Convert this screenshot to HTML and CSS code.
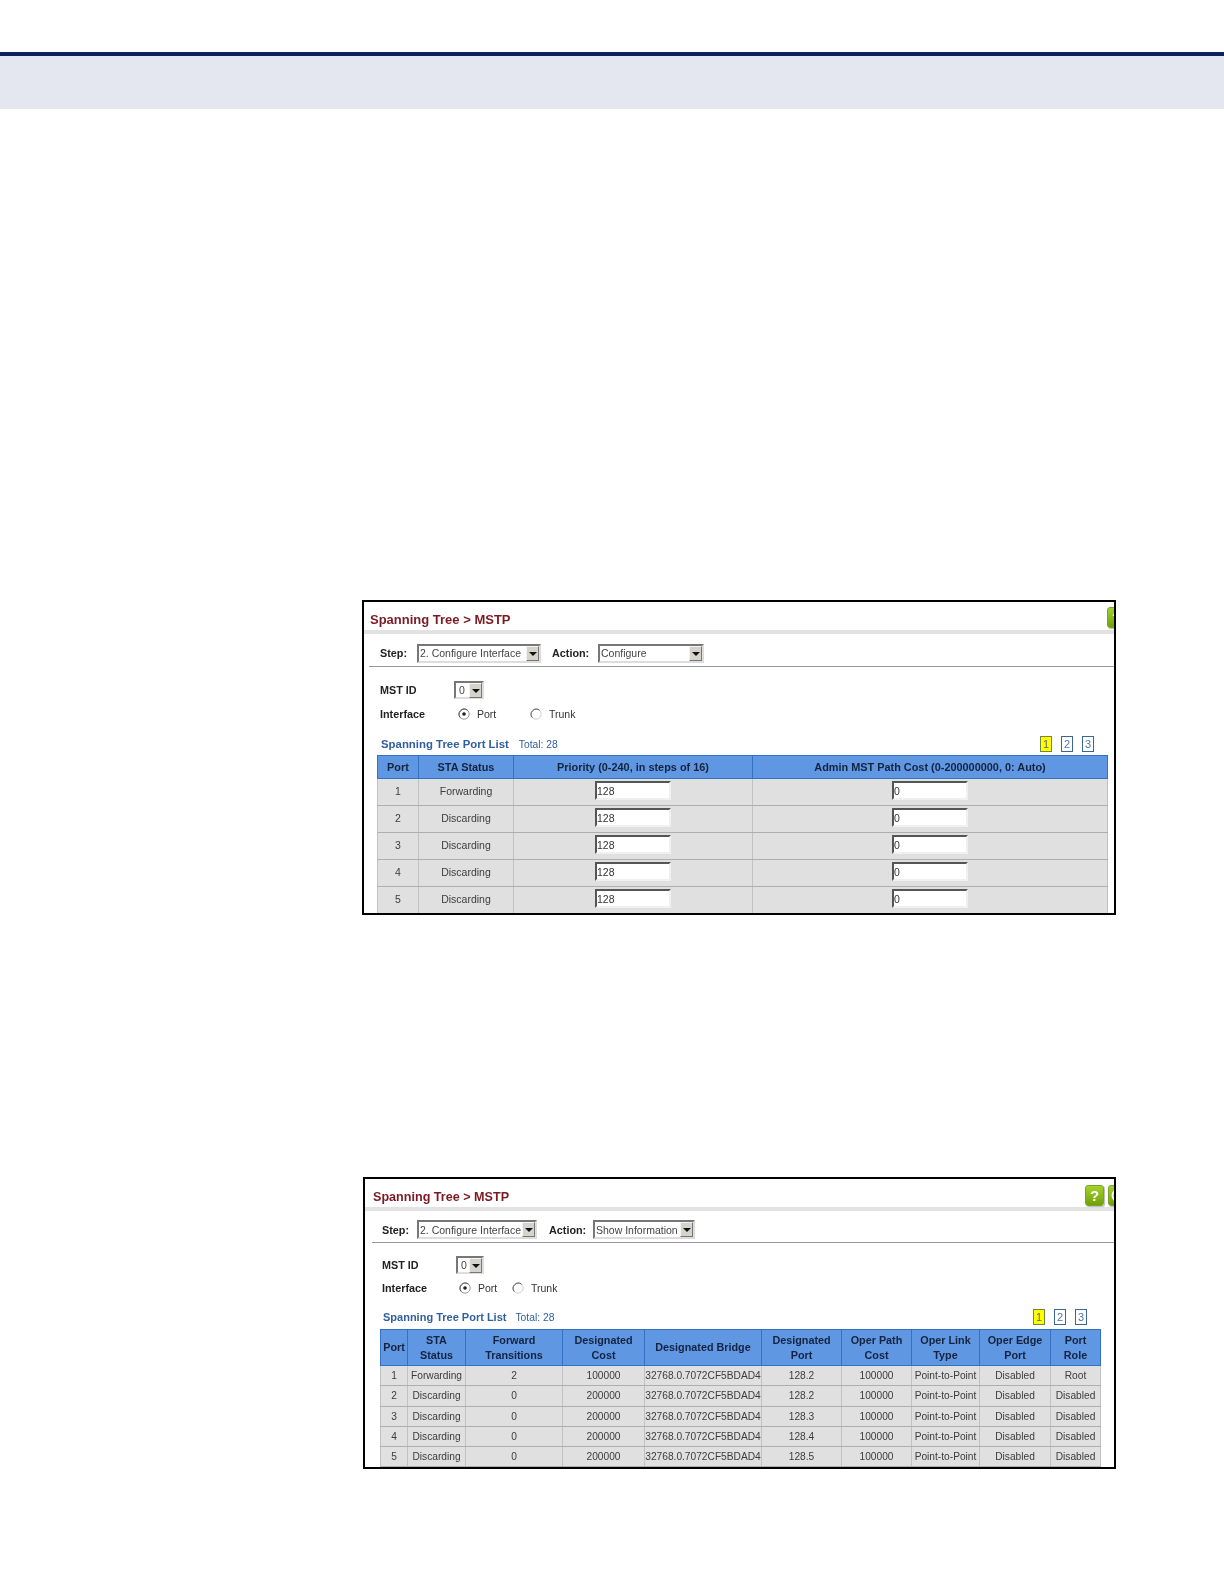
FILE: index.html
```html
<!DOCTYPE html>
<html lang="en">
<head>
<meta charset="utf-8">
<title>Spanning Tree &gt; MSTP</title>
<link rel="stylesheet" href="styles.css">
</head>
<body>
<header class="band"></header>

<section class="panel panel-a">
  <div class="head">
    <h1 class="title">Spanning Tree &gt; MSTP</h1>
    <span class="icon">?</span>
  </div>
  <div class="toolbar">
    <span class="label">Step:</span>
    <span class="sel sel-step"><span class="sel-text">2. Configure Interface</span><span class="arrow"></span></span>
    <span class="label label-action">Action:</span>
    <span class="sel sel-action"><span class="sel-text">Configure</span><span class="arrow"></span></span>
  </div>
  <div class="form-row row-mst">
    <span class="label form-label">MST ID</span>
    <span class="sel sel-id"><span class="sel-text">0</span><span class="arrow"></span></span>
  </div>
  <div class="form-row row-iface">
    <span class="label form-label">Interface</span>
    <svg class="radio" viewBox="0 0 12 12"><circle cx="6" cy="6" r="5.2" fill="#fff" stroke="#9a9a9a"/><path d="M2.3 9.6A5.2 5.2 0 0 1 9.6 2.3" fill="none" stroke="#555"/><circle cx="6" cy="6" r="1.8" fill="#222"/></svg>
    <span class="opt opt-port">Port</span>
    <svg class="radio" viewBox="0 0 12 12"><circle cx="6" cy="6" r="5.2" fill="#fff" stroke="#d0d0d0"/><path d="M2.3 9.6A5.2 5.2 0 0 1 9.6 2.3" fill="none" stroke="#555"/></svg>
    <span class="opt">Trunk</span>
  </div>
  <div class="list-head">
    <span class="list-title">Spanning Tree Port List</span>
    <span class="total">Total: 28</span>
    <span class="pager">
      <span class="page page-on">1</span>
      <span class="page">2</span>
      <span class="page">3</span>
    </span>
  </div>
  <table class="grid">
    <colgroup><col class="a1"><col class="a2"><col class="a3"><col class="a4"></colgroup>
    <thead>
      <tr><th>Port</th><th>STA Status</th><th>Priority (0-240, in steps of 16)</th><th>Admin MST Path Cost (0-200000000, 0: Auto)</th></tr>
    </thead>
    <tbody>
      <tr><td>1</td><td>Forwarding</td><td class="cell-field"><span class="field">128</span></td><td class="cell-field"><span class="field">0</span></td></tr>
      <tr><td>2</td><td>Discarding</td><td class="cell-field"><span class="field">128</span></td><td class="cell-field"><span class="field">0</span></td></tr>
      <tr><td>3</td><td>Discarding</td><td class="cell-field"><span class="field">128</span></td><td class="cell-field"><span class="field">0</span></td></tr>
      <tr><td>4</td><td>Discarding</td><td class="cell-field"><span class="field">128</span></td><td class="cell-field"><span class="field">0</span></td></tr>
      <tr><td>5</td><td>Discarding</td><td class="cell-field"><span class="field">128</span></td><td class="cell-field"><span class="field">0</span></td></tr>
    </tbody>
  </table>
</section>

<section class="panel panel-b">
  <div class="head">
    <h1 class="title">Spanning Tree &gt; MSTP</h1>
    <span class="icon">?</span>
    <span class="icon icon-next"><svg class="refresh" viewBox="0 0 19 20"><path d="M14 5.5A6 6 0 1 0 14 14.5" fill="none" stroke="#fff" stroke-width="2.4"/></svg></span>
  </div>
  <div class="toolbar">
    <span class="label">Step:</span>
    <span class="sel sel-step"><span class="sel-text">2. Configure Interface</span><span class="arrow"></span></span>
    <span class="label label-action">Action:</span>
    <span class="sel sel-action"><span class="sel-text">Show Information</span><span class="arrow"></span></span>
  </div>
  <div class="form-row row-mst">
    <span class="label form-label">MST ID</span>
    <span class="sel sel-id"><span class="sel-text">0</span><span class="arrow"></span></span>
  </div>
  <div class="form-row row-iface">
    <span class="label form-label">Interface</span>
    <svg class="radio" viewBox="0 0 12 12"><circle cx="6" cy="6" r="5.2" fill="#fff" stroke="#9a9a9a"/><path d="M2.3 9.6A5.2 5.2 0 0 1 9.6 2.3" fill="none" stroke="#555"/><circle cx="6" cy="6" r="1.8" fill="#222"/></svg>
    <span class="opt opt-port">Port</span>
    <svg class="radio" viewBox="0 0 12 12"><circle cx="6" cy="6" r="5.2" fill="#fff" stroke="#d0d0d0"/><path d="M2.3 9.6A5.2 5.2 0 0 1 9.6 2.3" fill="none" stroke="#555"/></svg>
    <span class="opt">Trunk</span>
  </div>
  <div class="list-head">
    <span class="list-title">Spanning Tree Port List</span>
    <span class="total">Total: 28</span>
    <span class="pager">
      <span class="page page-on">1</span>
      <span class="page">2</span>
      <span class="page">3</span>
    </span>
  </div>
  <table class="grid">
    <colgroup><col class="b1"><col class="b2"><col class="b3"><col class="b4"><col class="b5"><col class="b6"><col class="b7"><col class="b8"><col class="b9"><col class="b10"></colgroup>
    <thead>
      <tr><th>Port</th><th>STA<br>Status</th><th>Forward<br>Transitions</th><th>Designated<br>Cost</th><th>Designated Bridge</th><th>Designated<br>Port</th><th>Oper Path<br>Cost</th><th>Oper Link<br>Type</th><th>Oper Edge<br>Port</th><th>Port<br>Role</th></tr>
    </thead>
    <tbody>
      <tr><td>1</td><td>Forwarding</td><td>2</td><td>100000</td><td>32768.0.7072CF5BDAD4</td><td>128.2</td><td>100000</td><td>Point-to-Point</td><td>Disabled</td><td>Root</td></tr>
      <tr><td>2</td><td>Discarding</td><td>0</td><td>200000</td><td>32768.0.7072CF5BDAD4</td><td>128.2</td><td>100000</td><td>Point-to-Point</td><td>Disabled</td><td>Disabled</td></tr>
      <tr><td>3</td><td>Discarding</td><td>0</td><td>200000</td><td>32768.0.7072CF5BDAD4</td><td>128.3</td><td>100000</td><td>Point-to-Point</td><td>Disabled</td><td>Disabled</td></tr>
      <tr><td>4</td><td>Discarding</td><td>0</td><td>200000</td><td>32768.0.7072CF5BDAD4</td><td>128.4</td><td>100000</td><td>Point-to-Point</td><td>Disabled</td><td>Disabled</td></tr>
      <tr><td>5</td><td>Discarding</td><td>0</td><td>200000</td><td>32768.0.7072CF5BDAD4</td><td>128.5</td><td>100000</td><td>Point-to-Point</td><td>Disabled</td><td>Disabled</td></tr>
    </tbody>
  </table>
</section>
</body>
</html>
```

FILE: styles.css
```css
html, body { margin: 0; padding: 0; background: #fff; }
body { font-family: "Liberation Sans", Arial, sans-serif; font-size: 10.5px; color: #333; height: 1584px; overflow: hidden; }

.band { margin-top: 52px; height: 53px; border-top: 4px solid #0b2358; background: #e4e7ef; }

.panel { box-sizing: border-box; border: 2px solid #000; overflow: hidden; background: #fff; }
.panel > * { filter: blur(.25px); }
.panel-a { margin: 491px 0 0 362px; width: 754px; height: 315px; }
.panel-b { margin: 262px 0 0 363px; width: 753px; height: 292px; }

.head { display: flex; align-items: flex-start; height: 28px; border-bottom: 4px solid #e2e2e2; }
.title { flex: none; margin: 0; box-sizing: border-box; line-height: 17px; font-weight: bold; color: #7a1a22; }
.panel-a .title { width: 743px; padding: 9px 0 0 6px; font-size: 13px; }
.panel-b .title { width: 720px; padding: 10px 0 0 8px; font-size: 12.6px; }

.icon { flex: none; position: relative; width: 19px; height: 21px; box-sizing: border-box; border-radius: 3px; background: linear-gradient(#a6d12c, #6ea20a); border: 1px solid #7aa520; box-shadow: 1px 1px 1px #bbb; color: #fff; font-size: 15px; line-height: 19px; font-weight: bold; text-align: center; }
.panel-a .icon { margin-top: 5px; }
.panel-b .icon { margin-top: 6px; }
.icon-next { margin-left: 4px; }
.refresh { display: block; width: 17px; height: 19px; }

.toolbar { display: flex; align-items: center; box-sizing: border-box; padding-top: 6px; border-bottom: 1px solid #999; }
.panel-a .toolbar { height: 33px; margin-left: 5px; padding-left: 11px; }
.panel-b .toolbar { height: 32px; margin-left: 7px; padding-left: 10px; }

.label { font-size: 10.8px; font-weight: bold; color: #222; white-space: nowrap; }
.panel-a .toolbar .label { width: 37px; }
.panel-b .toolbar .label { width: 35px; }
.panel-a .toolbar .label-action { width: 46px; margin-left: 11px; }
.panel-b .toolbar .label-action { width: 44px; margin-left: 12px; }

.sel { display: flex; align-items: center; justify-content: space-between; box-sizing: border-box; height: 19px; border: 2px solid; border-color: #777 #ddd #ddd #777; background: #fff; color: #444; padding-left: 1px; }
.sel-text { white-space: nowrap; }
.arrow { position: relative; flex: none; width: 13px; height: 15px; background: #d6d3cc; border: 1px solid; box-sizing: border-box; border-color: #f4f4f4 #777 #777 #f4f4f4; }
.arrow::after { content: ""; position: absolute; left: 2px; top: 5px; border: 4px solid transparent; border-bottom-width: 0; border-top-color: #111; }
.panel-a .sel-step { width: 124px; }
.panel-b .sel-step { width: 120px; }
.panel-a .sel-action { width: 106px; }
.panel-b .sel-action { width: 102px; }
.sel-id { height: 18px; padding-left: 3px; }
.panel-a .sel-id { width: 30px; }
.panel-b .sel-id { width: 28px; }

.form-row { display: flex; align-items: center; }
.panel-a .form-row { padding-left: 16px; }
.panel-b .form-row { padding-left: 17px; }
.form-label { flex: none; width: 74px; }
.panel-a .row-mst { height: 18px; margin-top: 14px; }
.panel-b .row-mst { height: 18px; margin-top: 13px; }
.panel-a .row-iface { height: 16px; margin-top: 7px; }
.panel-b .row-iface { height: 16px; margin-top: 6px; }

.radio { flex: none; width: 12px; height: 12px; }
.panel-a .radio { margin-left: 4px; }
.panel-b .radio { margin-left: 3px; }
.opt { color: #333; margin-left: 7px; }
.panel-a .opt-port { width: 49px; }
.panel-b .opt-port { width: 31px; }

.list-head { display: flex; align-items: center; height: 18px; }
.panel-a .list-head { margin-top: 13px; padding-left: 17px; }
.panel-b .list-head { margin-top: 12px; padding-left: 18px; }
.list-title { font-weight: bold; color: #2f5f9e; white-space: nowrap; }
.panel-a .list-title { font-size: 11.4px; }
.panel-b .list-title { font-size: 11px; }
.total { color: #2f5f9e; white-space: nowrap; font-size: 10.3px; }
.panel-a .total { margin-left: 10px; }
.panel-b .total { margin-left: 9px; }
.pager { display: flex; margin-left: auto; gap: 9px; }
.panel-a .pager { margin-right: 20px; }
.panel-b .pager { margin-right: 27px; }
.page { box-sizing: border-box; width: 12px; height: 16px; border: 1px solid #3b6592; color: #4a76a8; font-size: 11px; line-height: 14px; text-align: center; background: #fff; }
.page-on { background: #ffff00; border-color: #6f8a3a; color: #666; }

.grid { border-collapse: collapse; table-layout: fixed; background: #e0e0e0; }
.panel-a .grid { width: 730px; margin: 2px 0 0 13px; }
.panel-b .grid { width: 720px; margin: 3px 0 0 15px; }
.a1 { width: 41px; } .a2 { width: 95px; } .a3 { width: 239px; } .a4 { width: 355px; }
.b1 { width: 27px; } .b2 { width: 58px; } .b3 { width: 97px; } .b4 { width: 82px; } .b5 { width: 117px; }
.b6 { width: 80px; } .b7 { width: 70px; } .b8 { width: 68px; } .b9 { width: 71px; } .b10 { width: 50px; }

th { padding: 0; background: #6097e2; border: 1px solid #3470c4; color: #14233f; font-weight: bold; text-align: center; }
.panel-a th { height: 22px; font-size: 10.9px; }
.panel-b th { height: 35px; font-size: 10.8px; line-height: 15px; }
td { padding: 0; border: 1px solid #c2c2c2; border-top: 0; border-bottom-color: #aeaeae; text-align: center; color: #3c3c3c; white-space: nowrap; overflow: hidden; }
.panel-a td { height: 24px; padding-bottom: 2px; }
.panel-a td.cell-field { height: 22px; padding-bottom: 4px; }
.panel-b td { height: 19.3px; font-size: 10.2px; }

.field { display: block; box-sizing: border-box; width: 76px; height: 19px; margin: 0 auto; border: 2px solid; border-color: #555 #f0f0f0 #f0f0f0 #555; background: #fff; text-align: left; line-height: 16px; color: #333; }
```
